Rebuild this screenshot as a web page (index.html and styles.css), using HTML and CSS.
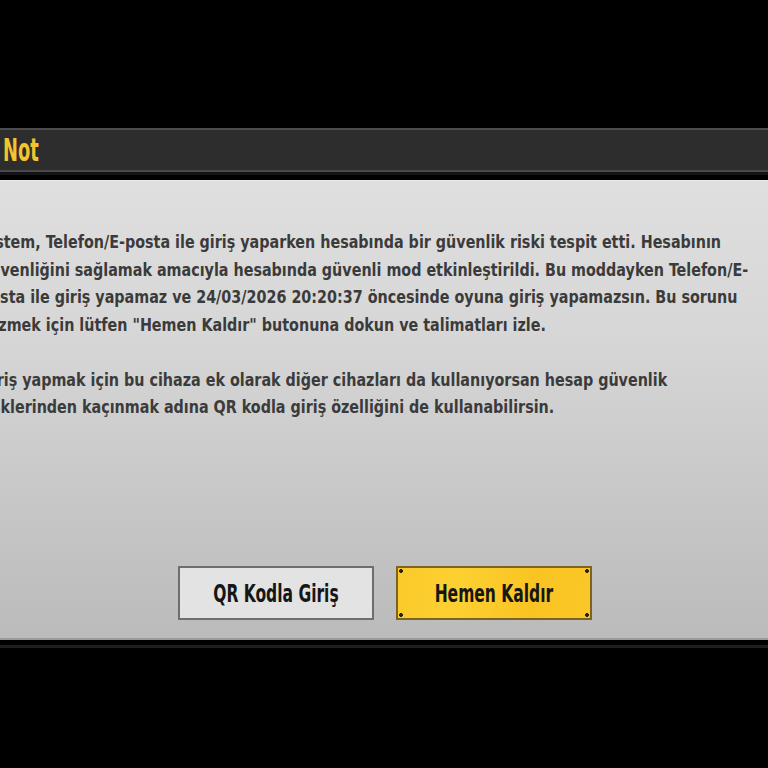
FILE: index.html
```html
<!DOCTYPE html>
<html lang="tr">
<head>
<meta charset="utf-8">
<link rel="stylesheet" href="styles.css">
</head>
<body>
<div class="screen">
  <div class="dialog">
    <div class="title-bar"><span class="title">Not</span></div>
    <div class="panel">
      <div class="message">
        <p class="para">
          <span class="line">Sistem, Telefon/E-posta ile giriş yaparken hesabında bir güvenlik riski tespit etti. Hesabının</span>
          <span class="line">güvenliğini sağlamak amacıyla hesabında güvenli mod etkinleştirildi. Bu moddayken Telefon/E-</span>
          <span class="line">posta ile giriş yapamaz ve 24/03/2026 20:20:37 öncesinde oyuna giriş yapamazsın. Bu sorunu</span>
          <span class="line">çözmek için lütfen "Hemen Kaldır" butonuna dokun ve talimatları izle.</span>
        </p>
        <p class="para">
          <span class="line">Giriş yapmak için bu cihaza ek olarak diğer cihazları da kullanıyorsan hesap güvenlik</span>
          <span class="line">risklerinden kaçınmak adına QR kodla giriş özelliğini de kullanabilirsin.</span>
        </p>
      </div>
      <div class="actions">
        <button class="btn btn-secondary"><span class="btn-label">QR Kodla Giriş</span></button>
        <button class="btn btn-primary"><span class="btn-label">Hemen Kaldır</span></button>
      </div>
    </div>
    <div class="bottom-edge"></div>
  </div>
</div>
</body>
</html>
```
FILE: styles.css
```css
html, body {
  margin: 0;
  padding: 0;
  background: #000;
  overflow: hidden;
  width: 768px;
  height: 768px;
}
body {
  font-family: "DejaVu Sans Condensed", "DejaVu Sans", sans-serif;
  font-weight: 700;
}
.screen {
  padding-top: 128px;
}
.dialog {
  margin: 0 -40px;
  display: flex;
  flex-direction: column;
}
.title-bar {
  height: 40px;
  background: #2d2d2d;
  border-top: 2px solid #4c4c4c;
  border-bottom: 2px solid #4a4a4a;
  box-shadow: 0 3px 0 #141414;
  display: flex;
  align-items: center;
  padding-left: 43px;
  margin-bottom: 8px;
}
.title {
  display: inline-block;
  color: #f2c430;
  font-size: 32px;
  transform: scaleX(0.62);
  transform-origin: left center;
}
.panel {
  height: 460px;
  background: linear-gradient(180deg, #dfdfdf 0%, #d6d6d6 35%, #c5c5c5 75%, #bbbbbb 100%);
  border-top: 1px solid #e9e9e9;
  border-bottom: 2px solid #9a9a9a;
  box-sizing: border-box;
  display: flex;
  flex-direction: column;
  padding: 48px 0 18px 20px;
}
.message {
  flex: 1;
  color: #3b3b3b;
  font-size: 17.5px;
  transform: scaleX(0.91);
  transform-origin: left top;
}
.para {
  margin: 0 0 27.5px;
}
.line {
  display: block;
  white-space: nowrap;
  line-height: 27.6px;
}
.actions {
  display: flex;
  justify-content: center;
  gap: 22px;
  padding-right: 20px;
  padding-left: 2px;
}
.btn {
  width: 196px;
  height: 54px;
  box-sizing: border-box;
  font-family: inherit;
  font-weight: 700;
  font-size: 25px;
  color: #161616;
  cursor: pointer;
  padding: 0;
  display: flex;
  align-items: center;
  justify-content: center;
}
.btn-label {
  display: inline-block;
  white-space: nowrap;
  transform: scaleX(0.69);
}
.btn-secondary {
  background: #e3e3e3;
  border: 2px solid #6e6e6e;
}
.btn-primary {
  border: 2px solid #7c6420;
  background:
    radial-gradient(circle at 3px 3px, #2b2200 1.6px, transparent 2.2px),
    radial-gradient(circle at calc(100% - 3px) 3px, #2b2200 1.6px, transparent 2.2px),
    radial-gradient(circle at 3px calc(100% - 3px), #2b2200 1.6px, transparent 2.2px),
    radial-gradient(circle at calc(100% - 3px) calc(100% - 3px), #2b2200 1.6px, transparent 2.2px),
    linear-gradient(100deg, #fbc92a 0%, #fdd032 30%, #f9c423 70%, #fbc728 100%);
}
.bottom-edge {
  height: 3px;
  margin-top: 5px;
  background: #1e1e1e;
}
```
